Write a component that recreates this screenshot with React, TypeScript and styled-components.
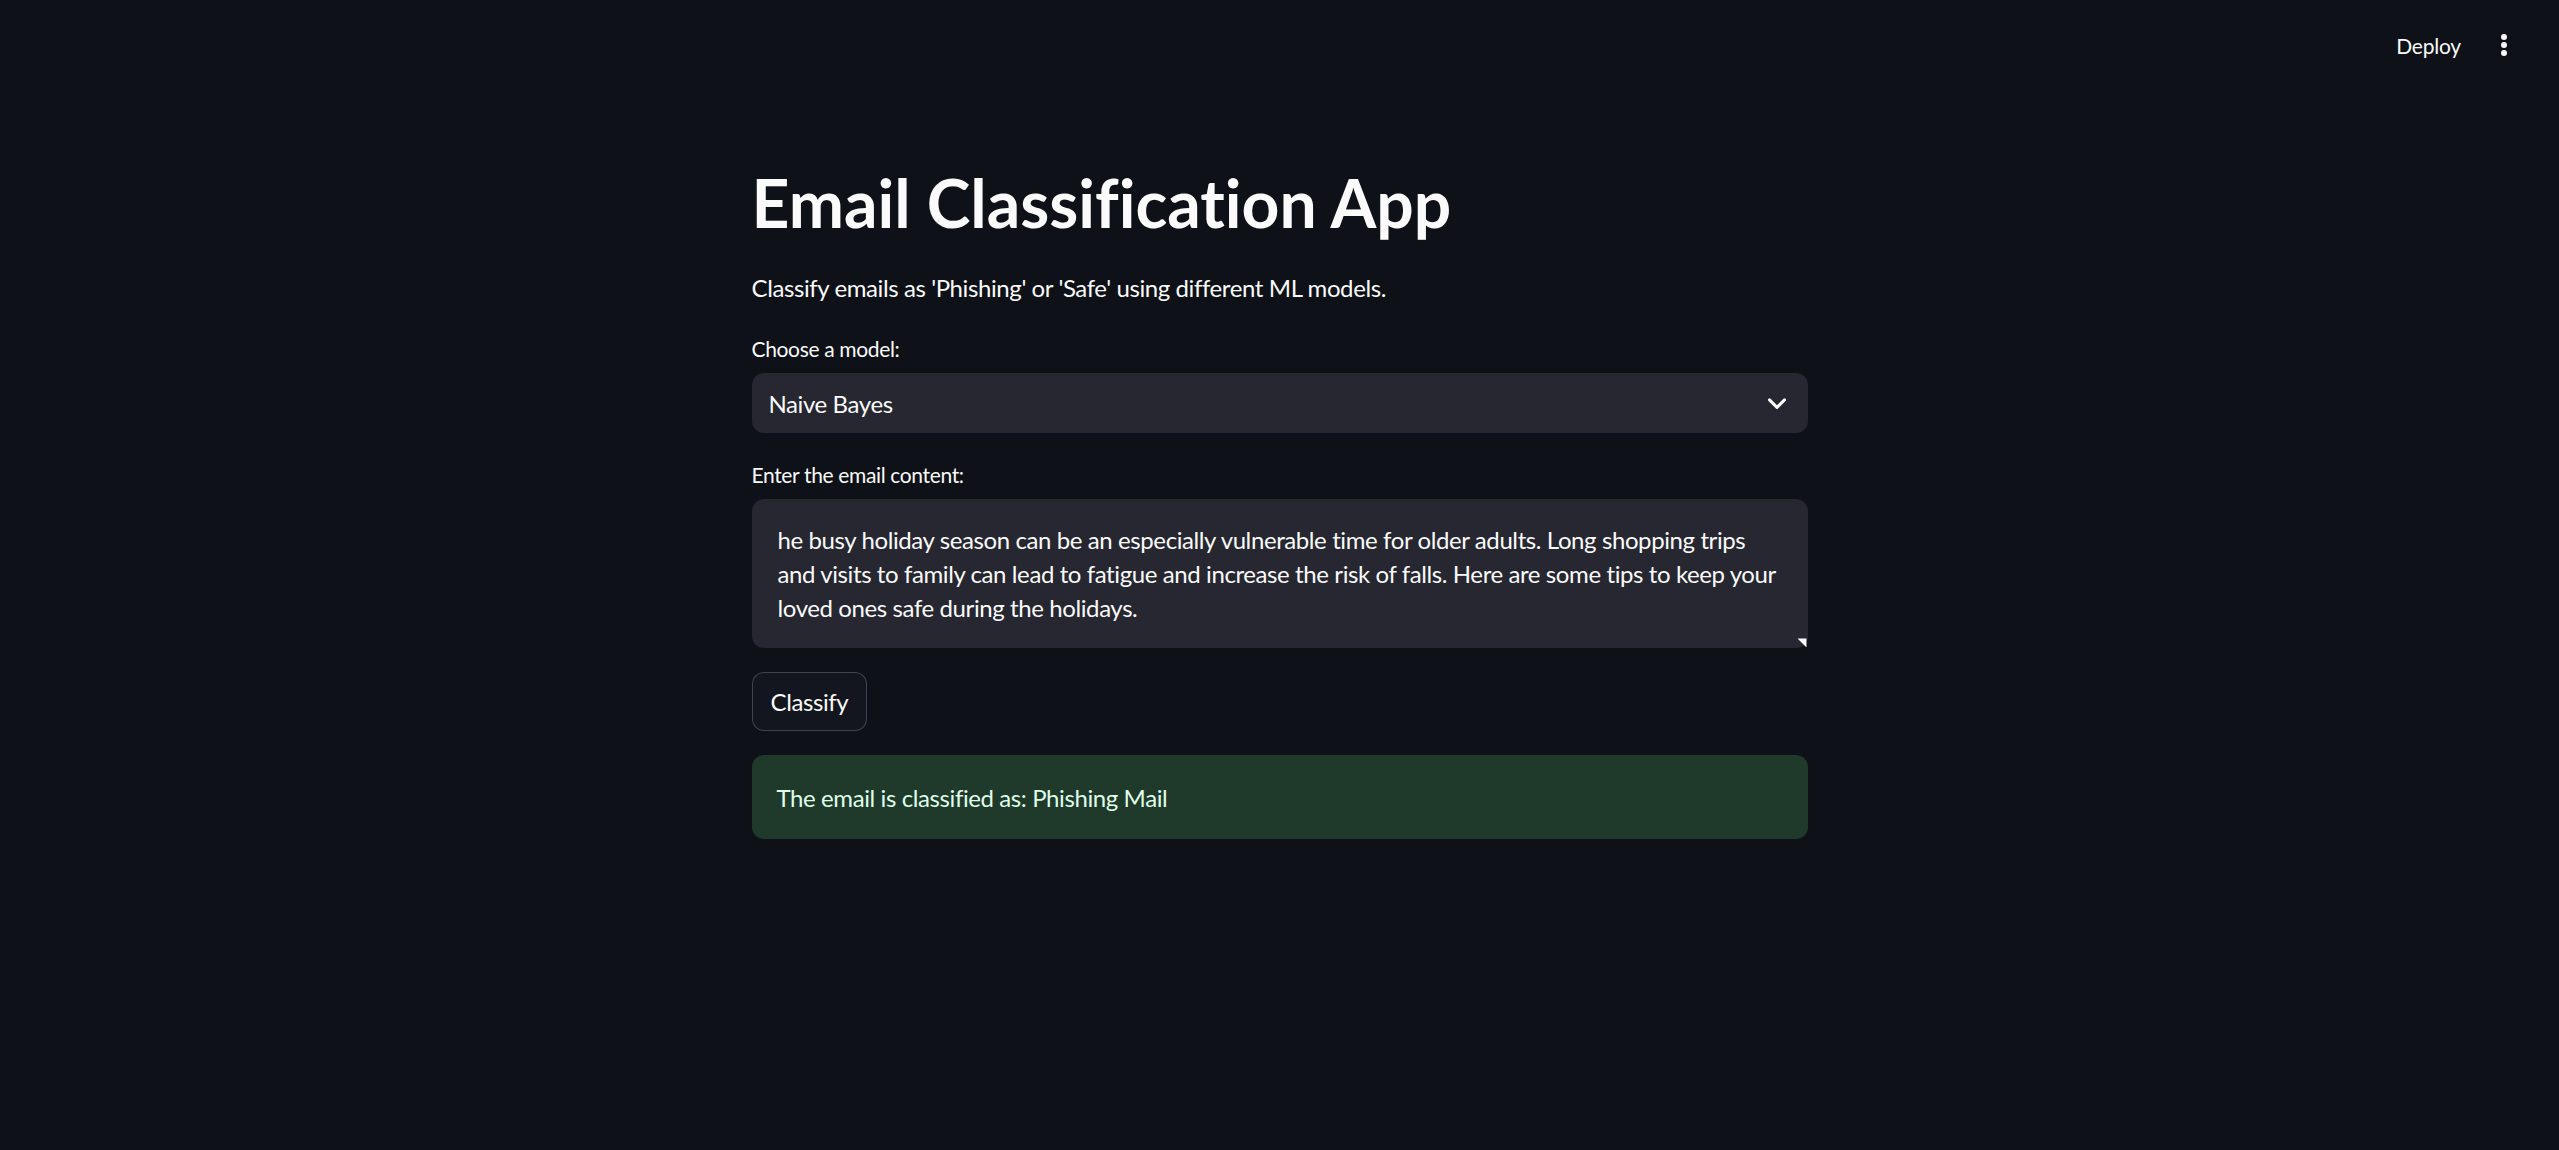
import React from "react";
import styled, { createGlobalStyle } from "styled-components";

const GlobalStyle = createGlobalStyle`
  html, body {
    margin: 0;
    padding: 0;
    background: #0e1117;
  }
  body {
    font-family: Lato, "Noto Sans", sans-serif;
    color: #fafafa;
    overflow: hidden;
    letter-spacing: -0.4px;
    font-variant-ligatures: none;
  }
  * { box-sizing: border-box; }
`;

const Page = styled.div`
  min-height: 100vh;
  background: #0e1117;
  display: flex;
  flex-direction: column;
`;

const Header = styled.header`
  height: 90px;
  display: flex;
  align-items: center;
  justify-content: flex-end;
  gap: 4px;
  padding: 0 34px 0 0;
`;

const DeployButton = styled.button`
  background: transparent;
  border: none;
  color: #fafafa;
  font-family: Lato, "Noto Sans", sans-serif;
  font-size: 21px;
  letter-spacing: -0.2px;
  padding: 0 18px;
  height: 48px;
  cursor: pointer;
`;

const MenuButton = styled.button`
  background: transparent;
  border: none;
  width: 42px;
  height: 42px;
  display: flex;
  align-items: center;
  justify-content: center;
  padding: 0;
  cursor: pointer;
`;

const Main = styled.main`
  width: 1056px;
  margin: 0 auto;
  padding-top: 73px;
  display: flex;
  flex-direction: column;
  gap: 24px;
`;

const Title = styled.h1`
  margin: 0;
  padding: 0 0 3px;
  font-size: 66px;
  line-height: 79px;
  font-weight: 700;
  color: #fafafa;
  letter-spacing: 0;
  font-variant-ligatures: none;
`;

const Paragraph = styled.p`
  margin: 0;
  font-size: 24px;
  line-height: 38.4px;
  color: #fafafa;
`;

const Field = styled.div`
  display: flex;
  flex-direction: column;
  gap: 6px;
`;

const Label = styled.label`
  font-size: 21px;
  line-height: 36px;
  height: 36px;
  color: #fafafa;
  letter-spacing: -0.35px;
`;

const SelectBox = styled.div`
  height: 60px;
  background: #262730;
  border-radius: 12px;
  display: flex;
  align-items: center;
  justify-content: space-between;
  padding: 0 16px 0 17px;
  font-size: 24px;
  color: #fafafa;
`;

const TextAreaWrap = styled.div`
  position: relative;
  height: 149px;
  background: #262730;
  border-radius: 12px;
`;

const TextArea = styled.textarea`
  width: 100%;
  height: 100%;
  background: transparent;
  border: none;
  outline: none;
  resize: none;
  padding: 24px 24px 24px 26px;
  font-family: Lato, "Noto Sans", sans-serif;
  font-size: 24px;
  line-height: 33.6px;
  letter-spacing: -0.4px;
  font-variant-ligatures: none;
  color: #fafafa;
  overflow: hidden;
`;

const ResizeHandle = styled.span`
  position: absolute;
  right: 1px;
  bottom: 1px;
  width: 9px;
  height: 9px;
  background: #fafafa;
  clip-path: polygon(0 0, 100% 0, 100% 100%);
`;

const Row = styled.div`
  display: flex;
`;

const Button = styled.button`
  height: 59px;
  padding: 0 18px;
  background: #13161e;
  border: 1px solid rgba(250, 250, 250, 0.2);
  border-radius: 12px;
  color: #fafafa;
  font-family: Lato, "Noto Sans", sans-serif;
  font-size: 24px;
  letter-spacing: -0.4px;
  cursor: pointer;
`;

const Alert = styled.div`
  height: 84px;
  display: flex;
  align-items: center;
  padding: 0 24px 0 25px;
  background: #1f3a2a;
  border-radius: 12px;
  font-size: 24px;
  color: #dffde9;
`;

const Chevron = () => (
  <svg width="30" height="30" viewBox="0 0 24 24" fill="none">
    <path d="M6 9.5l6 6 6-6" stroke="#fafafa" strokeWidth="2.4" strokeLinecap="round" strokeLinejoin="round" />
  </svg>
);

const Dots = () => (
  <svg width="8" height="24" viewBox="0 0 8 24">
    <circle cx="4" cy="4" r="3" fill="#fafafa" />
    <circle cx="4" cy="12" r="3" fill="#fafafa" />
    <circle cx="4" cy="20" r="3" fill="#fafafa" />
  </svg>
);

const emailText =
  "he busy holiday season can be an especially vulnerable time for older adults. Long shopping trips and visits to family can lead to fatigue and increase the risk of falls. Here are some tips to keep your loved ones safe during the holidays.";

export default function App() {
  return (
    <>
      <GlobalStyle />
      <Page>
        <Header>
          <DeployButton>Deploy</DeployButton>
          <MenuButton aria-label="Main menu">
            <Dots />
          </MenuButton>
        </Header>
        <Main>
          <Title>Email Classification App</Title>
          <Paragraph>Classify emails as 'Phishing' or 'Safe' using different ML models.</Paragraph>
          <Field>
            <Label>Choose a model:</Label>
            <SelectBox>
              <span>Naive Bayes</span>
              <Chevron />
            </SelectBox>
          </Field>
          <Field>
            <Label>Enter the email content:</Label>
            <TextAreaWrap>
              <TextArea defaultValue={emailText} />
              <ResizeHandle />
            </TextAreaWrap>
          </Field>
          <Row>
            <Button>Classify</Button>
          </Row>
          <Alert>The email is classified as: Phishing Mail</Alert>
        </Main>
      </Page>
    </>
  );
}
